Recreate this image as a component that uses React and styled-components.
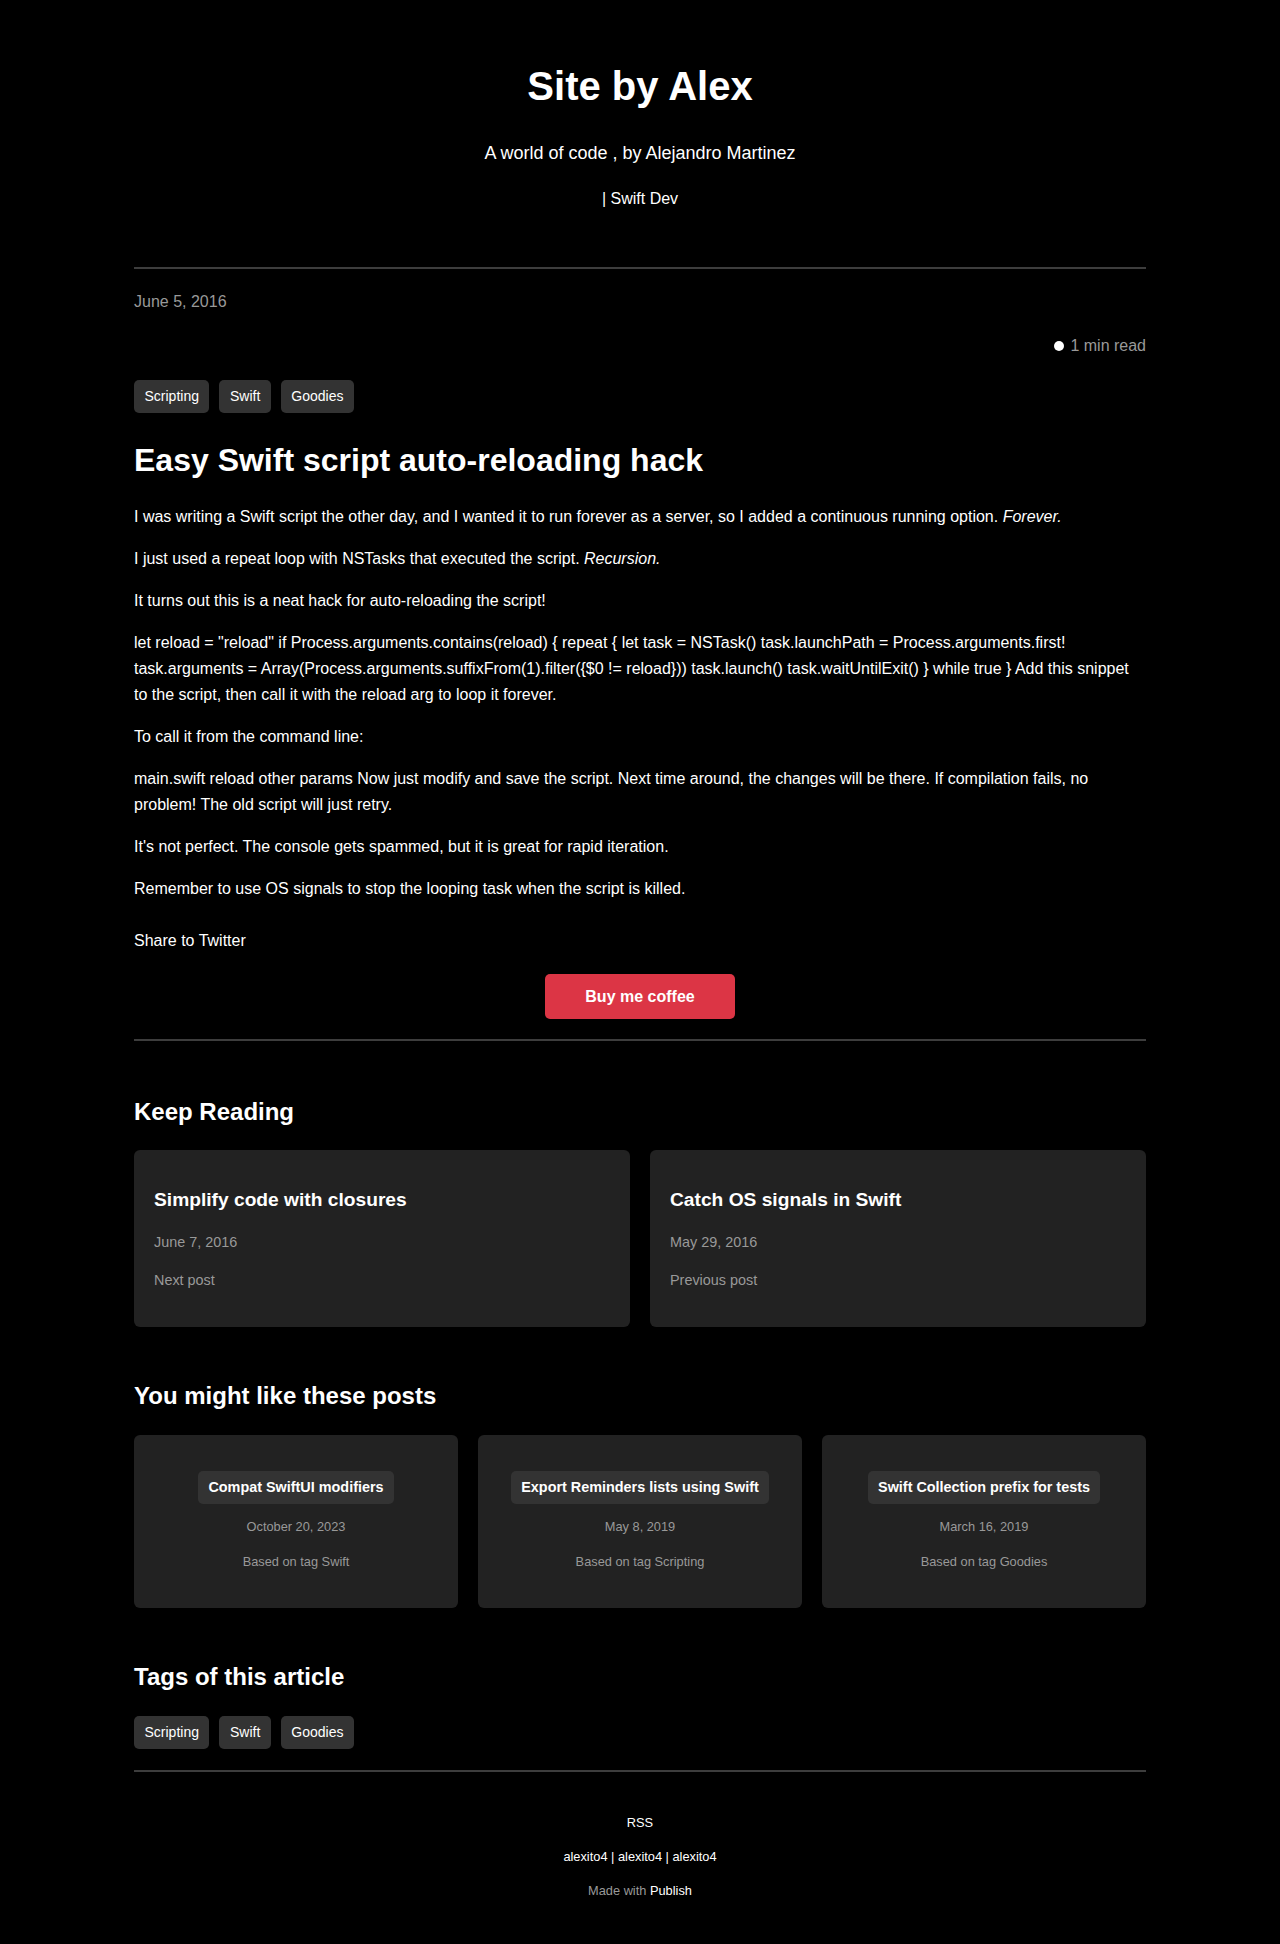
import React from 'react';
import styled, { createGlobalStyle } from 'styled-components';

const GlobalStyle = createGlobalStyle`
  html, body {
    margin: 0;
    padding: 0;
    background: #000;
  }

  body {
    color: #fff;
    font-family: 'Liberation Sans', Arial, Helvetica, sans-serif;
    font-size: 16px;
  }

  a {
    color: inherit;
    text-decoration: none;
  }
`;

const Page = styled.div`
  width: 1012px;
  margin: 0 auto;
  padding-bottom: 40px;
`;

const Header = styled.header`
  padding-top: 62px;
  text-align: center;
`;

const SiteTitle = styled.h1`
  margin: 0;
  font-size: 40px;
  line-height: 48px;
  font-weight: 700;
`;

const Tagline = styled.p`
  margin: 31px 0 0;
  font-size: 18px;
  line-height: 24px;
`;

const Role = styled.p`
  margin: 23px 0 0;
  font-size: 16px;
  line-height: 22px;
`;

const Divider = styled.hr`
  margin: ${(p) => p.$top || 0}px 0 0;
  height: 2px;
  border: 0;
  background: #3d3d3d;
`;

const PostDate = styled.div`
  margin-top: 21px;
  font-size: 16px;
  line-height: 24px;
  color: #999;
`;

const ReadTime = styled.div`
  display: flex;
  justify-content: flex-end;
  align-items: center;
  gap: 6px;
  margin-top: 20px;
  font-size: 16px;
  line-height: 24px;
  color: #999;
`;

const Dot = styled.span`
  width: 10px;
  height: 10px;
  border-radius: 50%;
  background: #fff;
`;

const TagList = styled.div`
  display: flex;
  gap: 10px;
  margin-top: ${(p) => p.$top}px;
`;

const Tag = styled.a`
  display: block;
  padding: 8px 10.5px;
  font-size: 14px;
  line-height: 17px;
  color: #fff;
  background: #333;
  border-radius: 5px;
`;

const ArticleTitle = styled.h1`
  margin: 27px 0 0;
  font-size: 32px;
  line-height: 40px;
  font-weight: 700;
`;

const Body = styled.div`
  display: flex;
  flex-direction: column;
  gap: 16px;
  margin-top: 24px;
`;

const Paragraph = styled.p`
  margin: 0;
  font-size: 16px;
  line-height: 26px;
`;

const Share = styled.a`
  display: block;
  margin-top: 26px;
  font-size: 16px;
  line-height: 26px;
`;

const ButtonRow = styled.div`
  display: flex;
  justify-content: center;
  margin-top: 20px;
`;

const CoffeeButton = styled.a`
  display: block;
  width: 190px;
  padding: 12px 0;
  box-sizing: border-box;
  text-align: center;
  font-size: 16px;
  line-height: 21px;
  font-weight: 700;
  color: #fff;
  background: #dc3545;
  border-radius: 5px;
`;

const SectionTitle = styled.h2`
  margin: ${(p) => p.$top}px 0 0;
  font-size: 24px;
  line-height: 30px;
  font-weight: 700;
`;

const Grid = styled.div`
  display: grid;
  grid-template-columns: repeat(${(p) => p.$cols}, 1fr);
  gap: 20px;
  margin-top: ${(p) => p.$top}px;
`;

const NavCard = styled.a`
  display: flex;
  flex-direction: column;
  padding: 38px 20px 37px;
  background: #222;
  border-radius: 6px;
`;

const NavTitle = styled.h3`
  margin: 0;
  font-size: 19.2px;
  line-height: 24px;
  font-weight: 700;
`;

const NavMeta = styled.span`
  margin-top: ${(p) => p.$top}px;
  font-size: 14.4px;
  line-height: 20px;
  color: #999;
`;

const RelatedCard = styled.a`
  display: flex;
  flex-direction: column;
  align-items: center;
  padding: 36px 20px 37px;
  background: #222;
  border-radius: 6px;
  text-align: center;
`;

const RelatedTitle = styled.span`
  padding: 8px 10px;
  font-size: 14.4px;
  line-height: 17px;
  font-weight: 700;
  background: #333;
  border-radius: 5px;
`;

const RelatedMeta = styled.span`
  margin-top: ${(p) => p.$top}px;
  font-size: 12.8px;
  line-height: 18px;
  color: #999;
`;

const Footer = styled.footer`
  display: flex;
  flex-direction: column;
  align-items: center;
  gap: 16px;
  padding-top: 42px;
  font-size: 12.8px;
  line-height: 18px;
`;

const Muted = styled.span`
  color: #999;
`;

const tags = ['Scripting', 'Swift', 'Goodies'];

const snippet =
  'let reload = "reload" if Process.arguments.contains(reload) { repeat { let task = NSTask() ' +
  'task.launchPath = Process.arguments.first! task.arguments = ' +
  'Array(Process.arguments.suffixFrom(1).filter({$0 != reload})) task.launch() ' +
  'task.waitUntilExit() } while true } Add this snippet to the script, then call it with the ' +
  'reload arg to loop it forever.';

const navPosts = [
  { title: 'Simplify code with closures', date: 'June 7, 2016', label: 'Next post' },
  { title: 'Catch OS signals in Swift', date: 'May 29, 2016', label: 'Previous post' },
];

const related = [
  { title: 'Compat SwiftUI modifiers', date: 'October 20, 2023', tag: 'Swift' },
  { title: 'Export Reminders lists using Swift', date: 'May 8, 2019', tag: 'Scripting' },
  { title: 'Swift Collection prefix for tests', date: 'March 16, 2019', tag: 'Goodies' },
];

const TagRow = ({ top }) => (
  <TagList $top={top}>
    {tags.map((t) => (
      <Tag key={t} href="#">
        {t}
      </Tag>
    ))}
  </TagList>
);

export default function App() {
  return (
    <>
      <GlobalStyle />
      <Page>
        <Header>
          <SiteTitle>Site by Alex</SiteTitle>
          <Tagline>A world of code , by Alejandro Martinez</Tagline>
          <Role>| Swift Dev</Role>
        </Header>

        <Divider $top={57} />

        <article>
          <PostDate>June 5, 2016</PostDate>
          <ReadTime>
            <Dot />
            <span>1 min read</span>
          </ReadTime>
          <TagRow top={22} />

          <ArticleTitle>Easy Swift script auto-reloading hack</ArticleTitle>

          <Body>
            <Paragraph>
              {'I was writing a Swift script the other day, and I wanted it to run forever as a server, so I added a continuous running option. '}
              <em>Forever.</em>
            </Paragraph>
            <Paragraph>
              {'I just used a repeat loop with NSTasks that executed the script. '}
              <em>Recursion.</em>
            </Paragraph>
            <Paragraph>It turns out this is a neat hack for auto-reloading the script!</Paragraph>
            <Paragraph>{snippet}</Paragraph>
            <Paragraph>To call it from the command line:</Paragraph>
            <Paragraph>
              {'main.swift reload other params Now just modify and save the script. Next time around, the changes will be there. If compilation fails, no problem! The old script will just retry.'}
            </Paragraph>
            <Paragraph>
              {"It's not perfect. The console gets spammed, but it is great for rapid iteration."}
            </Paragraph>
            <Paragraph>
              Remember to use OS signals to stop the looping task when the script is killed.
            </Paragraph>
          </Body>

          <Share href="#">Share to Twitter</Share>
          <ButtonRow>
            <CoffeeButton href="#">Buy me coffee</CoffeeButton>
          </ButtonRow>
        </article>

        <Divider $top={20} />

        <section>
          <SectionTitle $top={56}>Keep Reading</SectionTitle>
          <Grid $cols={2} $top={23}>
            {navPosts.map((p) => (
              <NavCard key={p.title} href="#">
                <NavTitle>{p.title}</NavTitle>
                <NavMeta $top={20}>{p.date}</NavMeta>
                <NavMeta $top={18}>{p.label}</NavMeta>
              </NavCard>
            ))}
          </Grid>
        </section>

        <section>
          <SectionTitle $top={54}>You might like these posts</SectionTitle>
          <Grid $cols={3} $top={24}>
            {related.map((p) => (
              <RelatedCard key={p.title} href="#">
                <RelatedTitle>{p.title}</RelatedTitle>
                <RelatedMeta $top={14}>{p.date}</RelatedMeta>
                <RelatedMeta $top={17}>{`Based on tag ${p.tag}`}</RelatedMeta>
              </RelatedCard>
            ))}
          </Grid>
        </section>

        <section>
          <SectionTitle $top={54}>Tags of this article</SectionTitle>
          <TagRow top={24} />
        </section>

        <Divider $top={21} />

        <Footer>
          <a href="#">RSS</a>
          <span>
            <a href="#">alexito4</a>
            {' | '}
            <a href="#">alexito4</a>
            {' | '}
            <a href="#">alexito4</a>
          </span>
          <span>
            <Muted>{'Made with '}</Muted>
            <a href="#">Publish</a>
          </span>
        </Footer>
      </Page>
    </>
  );
}
